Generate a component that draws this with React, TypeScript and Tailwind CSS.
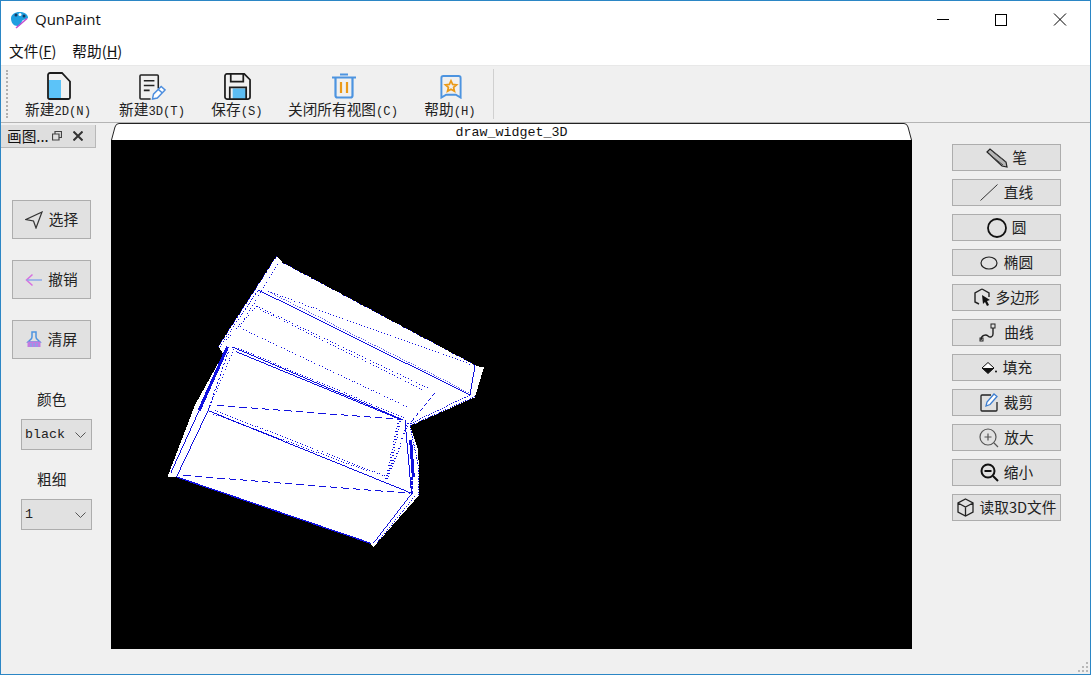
import React from 'react'

const mono = 'font-["Liberation_Mono","Noto_Sans_CJK_SC",monospace]'

function Dot({ x, y, r, c }: { x: number; y: number; r: number; c: string }) {
  return <circle cx={x} cy={y} r={r} fill={c} />
}

function AppIcon() {
  return (
    <svg width="19" height="18" viewBox="0 0 19 18">
      <path d="M1 7.500C1 3.500 5 1 9.500 1S17 2.500 18 6c.4 1.600-1.500 2.500-3 2.500-2 0-3 1-3.500 3-.5 2-2 3.500-4 3.500C3.500 15 1 11.500 1 7.500z" fill="#1f9fe0" />
      <Dot x={6} y={4} r={1.500} c="#123c66" />
      <Dot x={10} y={3.400} r={1.500} c="#fff" />
      <Dot x={14} y={5} r={1.500} c="#123c66" />
      <path d="M6 17L17 7.500" stroke="#c14fd0" strokeWidth="1.600" />
    </svg>
  )
}

function NewFile2D() {
  return (
    <svg width="24" height="28" viewBox="0 0 24 28" className="ml-[2px]">
      <path d="M1.500 8h12.500v19H2.500a1 1 0 0 1-1-1z" fill="#5cc3f8" />
      <path d="M3 1h12l8 8.500V25.500a1.500 1.500 0 0 1-1.500 1.500h-19A1.500 1.500 0 0 1 1 25.500V3a2 2 0 0 1 2-2z" fill="none" stroke="#1c1c1c" strokeWidth="1.800" />
    </svg>
  )
}

function NewFile3D() {
  return (
    <svg width="27" height="26" viewBox="0 0 28 27">
      <path d="M20 15V2a1 1 0 0 0-1-1H2a1 1 0 0 0-1 1v23a1 1 0 0 0 1 1h10" fill="none" stroke="#222" strokeWidth="1.600" />
      <path d="M5 7h11M5 12h11M5 17h6" stroke="#222" strokeWidth="1.600" />
      <path d="M14 26l1-5 8-8 4 3.500-8 8.500z" fill="#fff" stroke="#4d8ede" strokeWidth="1.500" />
      <path d="M20 16l4 3.500" stroke="#4d8ede" strokeWidth="1.500" />
    </svg>
  )
}

function SaveIcon() {
  return (
    <svg width="27" height="27" viewBox="0 0 28 28">
      <rect x="9" y="16" width="14" height="11" fill="#5cbdf3" />
      <path d="M3 1h18l6 6v18a2 2 0 0 1-2 2H3a2 2 0 0 1-2-2V3a2 2 0 0 1 2-2z" fill="none" stroke="#1c1c1c" strokeWidth="1.800" />
      <path d="M7 1v8h13V1M6 27V15h17v12" fill="none" stroke="#1c1c1c" strokeWidth="1.800" />
    </svg>
  )
}

function TrashIcon() {
  return (
    <svg width="24" height="26" viewBox="0 0 24 26" className="ml-[2px] mb-[1px]">
      <path d="M0 4.500h24M8 1.500h8" stroke="#4d94e0" strokeWidth="2.200" />
      <path d="M3.500 5v17.500a2 2 0 0 0 2 2h13a2 2 0 0 0 2-2V5" fill="none" stroke="#4d94e0" strokeWidth="2.200" />
      <path d="M9 9v11M15 9v11" stroke="#eb9a18" strokeWidth="2.200" />
    </svg>
  )
}

function HelpIcon() {
  return (
    <svg width="22" height="24" viewBox="0 0 22 25" className="ml-[2px] mb-[1px]">
      <path d="M3 1h16a2 2 0 0 1 2 2v20.500l-5-3H6l-5 3V3a2 2 0 0 1 2-2z" fill="none" stroke="#4d94e0" strokeWidth="2" />
      <path d="M11 6l1.700 3.800 4.100.4-3.100 2.700.9 4-3.600-2.100-3.600 2.100.9-4-3.100-2.700 4.100-.4z" fill="none" stroke="#eb9a18" strokeWidth="1.800" />
    </svg>
  )
}

function ToolbarItem({ icon, label, latin, className }: { icon: React.ReactNode; label: string; latin: string; className: string }) {
  return (
    <div className={`flex flex-col items-center ${className}`}>
      <div className="h-[31px] flex items-end justify-center">{icon}</div>
      <span className="text-[14.67px] leading-[18px] whitespace-nowrap text-[#222]">
        {label}<span className={`${mono} text-[12.2px]`}>{latin}</span>
      </span>
    </div>
  )
}

function ToolButton({ icon, label, className }: { icon: React.ReactNode; label: string; className: string }) {
  return (
    <div className={`flex items-center justify-center bg-[#e1e1e1] border border-[#adadad] text-[14.67px] text-[#222] font-["Noto_Sans_CJK_SC",sans-serif] ${className}`}>
      {icon}
      <span className="leading-none whitespace-nowrap">{label}</span>
    </div>
  )
}

function Combo({ value, className }: { value: string; className?: string }) {
  return (
    <div className={`flex items-center justify-between w-[71px] h-[31px] bg-[#e1e1e1] border border-[#adadad] pl-[3px] pr-[5px] ${className ?? ''}`}>
      <span className={`${mono} text-[13.3px] text-[#222] mt-[1px]`}>{value}</span>
      <svg width="11" height="6" viewBox="0 0 11 6"><path d="M.5.5l5 5 5-5" fill="none" stroke="#555" /></svg>
    </div>
  )
}

function Ico({ w, h, children, cn }: { w: number; h: number; children: React.ReactNode; cn: string }) {
  return <svg width={w} height={h} viewBox={`0 0 ${w} ${h}`} className={cn}>{children}</svg>
}

// the wire model, coordinates measured off a 3x crop
function Model() {
  const blue = '#1010e0'
  return (
    <svg width="801" height="509" viewBox="111 140 801 509" className="block">
      <g transform="translate(160 250) scale(0.3333)" shapeRendering="crispEdges" fill="none">
        <path d="M350 18L368 38 950 348 972 352 945 442 750 528 775 600 778 735 640 892 628 880 52 682 22 682 105 465 190 312 175 290z" fill="#fff" />
        <g stroke={blue} strokeWidth="3">
          <path d="M175 290L350 18" strokeDasharray="4 4" />
          <path d="M368 38L950 348" strokeDasharray="3 9" />
          <path d="M180 290L295 120" strokeDasharray="3 3" />
          <path d="M240 230L355 40" strokeDasharray="3 6" />
          <path d="M295 120L930 435" />
          <path d="M325 125L930 430" strokeWidth="2" strokeDasharray="3 3" />
          <path d="M325 125L945 348" strokeDasharray="3 6" />
          <path d="M290 168L805 415" strokeDasharray="3 6" />
          <path d="M300 178L790 420" strokeDasharray="3 6" />
          <path d="M250 238L740 470" strokeDasharray="3 6" />
          <path d="M290 168L180 290" strokeDasharray="3 6" />
          <path d="M368 38L295 120" strokeDasharray="3 5" />
          <path d="M825 428L750 520" strokeDasharray="12 8" />
          <path d="M930 435L750 522" strokeDasharray="3 3" />
          <path d="M945 440L750 528" strokeDasharray="3 3" />
          <path d="M945 348L930 435" />
          <path d="M215 290L730 510" />
          <path d="M228 305L725 510" />
          <path d="M235 295L735 505" strokeDasharray="3 5" />
          <path d="M203 290L118 480" strokeWidth="9" />
          <path d="M118 480L32 670" />
          <path d="M225 290L145 480" strokeDasharray="3 6" />
          <path d="M205 305L145 480" strokeDasharray="6 6" />
          <path d="M145 480L50 680" />
          <path d="M170 466L720 508" strokeDasharray="22 12" />
          <path d="M145 482L755 730" />
          <path d="M165 482L680 680" strokeDasharray="3 5" />
          <path d="M160 492L620 662" strokeDasharray="3 5" />
          <path d="M70 676L750 730" strokeDasharray="22 12" />
          <path d="M52 682L632 880" strokeWidth="4" />
          <path d="M752 735L640 880" />
          <path d="M765 738L650 880" strokeDasharray="4 4" />
          <path d="M720 505L680 690" strokeWidth="10" strokeDasharray="2 6" />
          <path d="M745 520L680 690" strokeWidth="6" strokeDasharray="2 6" />
          <path d="M735 510L755 735" />
          <path d="M752 570L760 680" strokeWidth="9" />
          <path d="M757 680V735" strokeWidth="5" strokeDasharray="10 4" />
          <path d="M750 528L776 650V735" strokeDasharray="4 4" />
        </g>
      </g>
    </svg>
  )
}

export default function App() {
  return (
    <div className='w-[1091px] h-[675px] flex flex-col bg-[#f0f0f0] border border-[#2b86c5] overflow-hidden font-["Noto_Sans_CJK_SC",sans-serif]'>
      {/* title bar */}
      <div className="h-[37px] bg-white flex items-center shrink-0">
        <div className="ml-[9px] mr-[6px]"><AppIcon /></div>
        <span className='font-["Open_Sans",sans-serif] text-[15px] text-[#111]'>QunPaint</span>
        <div className="ml-auto mr-[1px] flex items-center">
          <div className="w-[58px] pr-[2px] flex justify-center"><div className="w-[12px] h-px bg-black" /></div>
          <div className="w-[58px] pr-[2px] flex justify-center"><div className="w-[12px] h-[12px] border border-black" /></div>
          <svg width="58" height="13" viewBox="0 0 58 13"><path d="M23 .5l12 12M35 .5l-12 12" stroke="#000" fill="none" /></svg>
        </div>
      </div>
      {/* menu bar */}
      <div className="h-[27px] bg-white flex items-center shrink-0 pl-[8px] gap-[16px] text-[14.67px] text-[#111] pb-[1px]">
        <span>文件(<u>F</u>)</span>
        <span>帮助(<u>H</u>)</span>
      </div>
      {/* toolbar */}
      <div className="h-[58px] flex shrink-0 border-t border-b border-t-[#e8e8e8] border-b-[#b4b4b4] relative">
        <div className="ml-[5px] mt-[4px] h-[48px] w-[2px] border-l-2 border-dotted border-[#b0b0b0]" />
        <div className="flex pt-[3px]">
          <ToolbarItem icon={<NewFile2D />} label="新建" latin="2D(N)" className="ml-[17px] w-[66px]" />
          <ToolbarItem icon={<NewFile3D />} label="新建" latin="3D(T)" className="ml-[28px] w-[66px]" />
          <ToolbarItem icon={<SaveIcon />} label="保存" latin="(S)" className="ml-[27px] w-[50px]" />
          <ToolbarItem icon={<TrashIcon />} label="关闭所有视图" latin="(C)" className="ml-[26px] w-[110px]" />
          <ToolbarItem icon={<HelpIcon />} label="帮助" latin="(H)" className="ml-[26px] w-[52px]" />
        </div>
        <div className="ml-[17px] my-[3px] w-px bg-[#d0d0d0]" />
      </div>
      {/* main */}
      <div className="flex flex-1 min-h-0">
        <div className="w-[110px] shrink-0 flex flex-col">
          <div className="mt-[2px] w-[95px] h-[23px] bg-[#dedede] border-b border-r border-[#b8b8b8] flex items-center pl-[6px] text-[14.67px] text-[#111]">
            <span className="leading-none">画图...</span>
            <svg width="10" height="10" viewBox="0 0 10 10" className="ml-[3px]"><path d="M3 2.500V.5h6.500v6H7M.5 3h6.500v6H.5z" fill="none" stroke="#444" strokeWidth="1.200" /></svg>
            <svg width="10" height="10" viewBox="0 0 10 10" className="ml-[11px]"><path d="M.5.5l9 9M9.500.5l-9 9" stroke="#333" strokeWidth="2" /></svg>
          </div>
          <div className="ml-[11px] mt-[52px] flex flex-col gap-[21px]">
            <ToolButton className="w-[79px] h-[39px]" label="选择" icon={<Ico w={18} h={18} cn="mr-[6px]"><path d="M17 1L1 8.500l7.500 1.500L11 17z" fill="none" stroke="#333" strokeWidth="1.200" /></Ico>} />
            <ToolButton className="w-[79px] h-[39px]" label="撤销" icon={<Ico w={17} h={14} cn="mr-[6px]"><path d="M7.500 1.500L1.500 7l6 5.500" fill="none" stroke="#d86fe0" strokeWidth="1.500" /><path d="M2 7h15" stroke="#8aa8e8" strokeWidth="1.500" /></Ico>} />
            <ToolButton className="w-[79px] h-[39px]" label="清屏" icon={<Ico w={16} h={17} cn="mr-[6px]"><path d="M6 1h4v5q0 2 2 3l2 2H2l2-2q2-1 2-3z" fill="none" stroke="#4d94e0" strokeWidth="1.500" /><path d="M1.500 10.500h13V16h-13z" fill="#c37be0" /><path d="M5 12v4M8 12v4M11 12v4" stroke="#6fb4ee" /></Ico>} />
          </div>
          <span className="ml-[36px] mt-[30px] text-[14.67px] leading-[20px] text-[#222]">颜色</span>
          <Combo value="black" className="ml-[20px] mt-[10px]" />
          <span className="ml-[36px] mt-[19px] text-[14.67px] leading-[20px] text-[#222]">粗细</span>
          <Combo value="1" className="ml-[20px] mt-[10px]" />
        </div>
        <div className="w-[801px] shrink-0 flex flex-col">
          <div className="h-[17px] flex">
            <svg width="8" height="17" viewBox="0 0 8 17"><path d="M0 17L4 4Q5 .5 8 .5V17z" fill="#fff" /><path d="M.5 17L4 4Q5 .5 8 .5" fill="none" stroke="#222" /></svg>
            <div className={`flex-1 bg-white border-t border-[#222] text-center ${mono} text-[13.33px] leading-[17px] text-[#111]`}>draw_widget_3D</div>
            <svg width="8" height="17" viewBox="0 0 8 17"><path d="M8 17L4 4Q3 .5 0 .5V17z" fill="#fff" /><path d="M7.500 17L4 4Q3 .5 0 .5" fill="none" stroke="#222" /></svg>
          </div>
          <div className="h-[509px] bg-black"><Model /></div>
        </div>
        <div className="flex-1 pl-[40px] pt-[21px] flex flex-col gap-[8px] relative">
          <ToolButton className="w-[109px] h-[27px]" label="笔" icon={<Ico w={22} h={20} cn="mr-[4px]"><path d="M1 4l3-3 16 13 1 5-5-1z" fill="#b5b5b5" stroke="#222" strokeWidth="1.200" /><path d="M3 6l14 11M6 3l14 11" stroke="#444" /></Ico>} />
          <ToolButton className="w-[109px] h-[27px]" label="直线" icon={<Ico w={18} h={17} cn="mr-[6px]"><path d="M.5 16.500L17.500.5" stroke="#333" fill="none" /></Ico>} />
          <ToolButton className="w-[109px] h-[27px]" label="圆" icon={<Ico w={20} h={20} cn="mr-[5px]"><circle cx="10" cy="10" r="9" fill="none" stroke="#111" strokeWidth="1.800" /></Ico>} />
          <ToolButton className="w-[109px] h-[27px]" label="椭圆" icon={<Ico w={18} h={14} cn="mr-[6px]"><ellipse cx="9" cy="7" rx="8" ry="6" fill="none" stroke="#222" strokeWidth="1.200" /></Ico>} />
          <ToolButton className="w-[109px] h-[27px]" label="多边形" icon={<Ico w={17} h={19} cn="mr-[5px]"><path d="M8 1l7 4v4M5 16l-4-2V5l7-4" fill="none" stroke="#222" strokeWidth="1.400" /><path d="M8 7l8 5-3 1 2 4-2 1-2-4-2 2z" fill="#111" /></Ico>} />
          <ToolButton className="w-[109px] h-[27px]" label="曲线" icon={<Ico w={19} h={19} cn="mr-[6px]"><path d="M2 17c0-5 5-6 7-4s5 1 5-2V5" fill="none" stroke="#222" strokeWidth="1.400" /><rect x="12" y="1" width="4" height="4" fill="none" stroke="#222" /><rect x="1" y="15" width="3" height="3" fill="none" stroke="#222" /></Ico>} />
          <ToolButton className="w-[109px] h-[27px]" label="填充" icon={<Ico w={16} h={12} cn="mr-[6px]"><path d="M7 .5L13 6 7 11.500 1 6z" fill="#fff" stroke="#111" /><path d="M1 6h12L7 11.500z" fill="#111" /><circle cx="15" cy="9.500" r="1" fill="#111" /></Ico>} />
          <ToolButton className="w-[109px] h-[27px]" label="裁剪" icon={<Ico w={19} h={19} cn="mr-[5px]"><path d="M11 2H2a1 1 0 0 0-1 1v14a1 1 0 0 0 1 1h14a1 1 0 0 0 1-1V9" fill="none" stroke="#222" strokeWidth="1.300" /><path d="M6 13l1-4 7-8 3 2.500-7 8z" fill="#fff" stroke="#3f7fd0" strokeWidth="1.300" /></Ico>} />
          <ToolButton className="w-[109px] h-[27px]" label="放大" icon={<Ico w={20} h={20} cn="mr-[5px]"><circle cx="9" cy="9" r="8" fill="none" stroke="#555" strokeWidth="1.200" /><path d="M5.500 9h7M9 5.500v7M15 15l4 4" stroke="#555" strokeWidth="1.200" /></Ico>} />
          <ToolButton className="w-[109px] h-[27px]" label="缩小" icon={<Ico w={19} h={19} cn="mr-[5px]"><circle cx="8" cy="8" r="6.500" fill="none" stroke="#111" strokeWidth="2" /><path d="M4.500 8h7M13 13l5 5" stroke="#111" strokeWidth="2" /></Ico>} />
          <ToolButton className="w-[109px] h-[27px]" label="读取3D文件" icon={<Ico w={17} h={19} cn="mr-[6px]"><path d="M8.500 1L16 5v9l-7.500 4L1 14V5zM1 5l7.500 4L16 5M8.500 9v9" fill="none" stroke="#222" strokeWidth="1.300" /></Ico>} />
          <svg width="10" height="10" viewBox="0 0 10 10" className="absolute right-[2px] bottom-[2px]"><g fill="#b8b8b8"><rect x="8" y="0" width="2" height="2" /><rect x="4" y="4" width="2" height="2" /><rect x="8" y="4" width="2" height="2" /><rect x="0" y="8" width="2" height="2" /><rect x="4" y="8" width="2" height="2" /><rect x="8" y="8" width="2" height="2" /></g></svg>
        </div>
      </div>
    </div>
  )
}
